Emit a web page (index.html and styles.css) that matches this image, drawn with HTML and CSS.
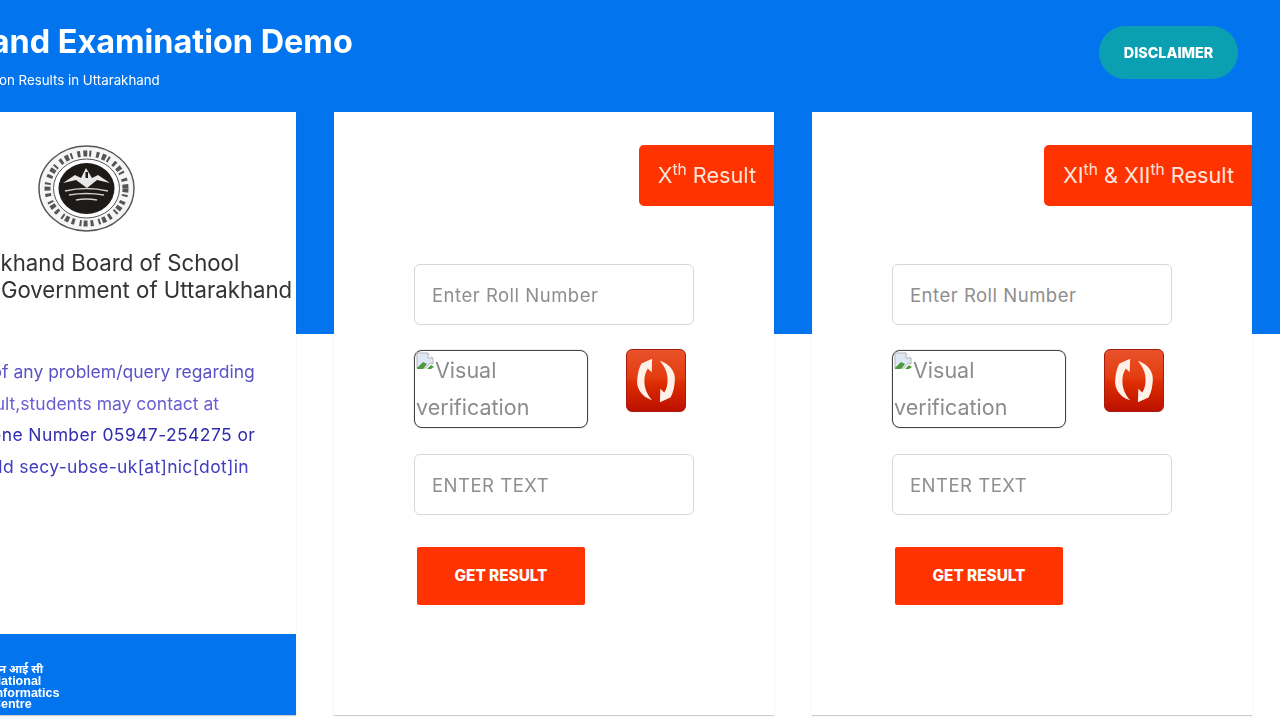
FILE: index.html
```html
<!DOCTYPE html>
<html>
<head>
    <title>Uttarakhand Examination Demo</title>
    <link rel="stylesheet" href="styles.css">
</head>
<body>
    <header class="topbar">
        <div class="brand">
            <h1>Uttarakhand Examination Demo</h1>
            <p>Uttarakhand Board Examination Results in Uttarakhand</p>
        </div>
        <a class="disclaimer" href="#">DISCLAIMER</a>
    </header>

    <main class="panels">
        <section class="card info-card">
            <svg class="seal" viewBox="0 0 97 87">
                <ellipse cx="48.500" cy="43.500" rx="47.500" ry="42.500" fill="#f6f6f6" stroke="#555" stroke-width="1.500"/>
                <ellipse cx="48.500" cy="43.500" rx="39" ry="35" fill="none" stroke="#555" stroke-width="6" stroke-dasharray="4 2 2 5 3 3"/>
                <ellipse cx="48.500" cy="43.500" rx="33" ry="29.500" fill="#fff" stroke="#555" stroke-width="1"/>
                <ellipse cx="48.500" cy="43.500" rx="28" ry="25.500" fill="#1e1a18"/>
                <path d="M25 38 L37 30 L43 33 L48 23 L54 33 L60 30 L72 38 L59 35 L49 43 L38 35 Z" fill="#e8e8e8"/>
                <path d="M47.500 27h2.500v6h-2.500z" fill="#1e1a18"/>
                <path d="M27 46 Q48 41 70 46 M31 50 Q48 47 66 50 M38 55 Q48 53 59 55" fill="none" stroke="#cfcfcf" stroke-width="1.500"/>
            </svg>
            <h2>Uttarakhand Board of School<br>Education, Government of Uttarakhand</h2>
            <div class="help">
                <p class="tone-a">In case of any problem/query regarding</p>
                <p class="tone-b">result,students may contact at</p>
                <p class="tone-c">Telephone Number 05947-254275 or</p>
                <p class="tone-d">Email Id secy-ubse-uk[at]nic[dot]in</p>
            </div>
            <div class="nic">
                <span class="nic-hindi">एन आई सी</span>
                <span>National</span>
                <span>Informatics</span>
                <span>Centre</span>
            </div>
        </section>

        <section class="card form-card">
            <div class="tab">X<sup>th</sup> Result</div>
            <form class="result-form">
                <input type="text" placeholder="Enter Roll Number">
                <div class="captcha-row">
                    <div class="captcha">
                        <svg class="broken" viewBox="0 0 18 18">
                            <path d="M1 1h11l5 5v6l-3-1-4 5H1z" fill="#dfe8f6" stroke="#b4b4b8"/>
                            <path d="M12 1v5h5" fill="#fff" stroke="#b4b4b8"/>
                            <path d="M1 16l6-6 4 2-4 5H1z" fill="#4c9a3c"/>
                            <path d="M11 17l4-4 3 2-3 2z" fill="#4c9a3c"/>
                        </svg>Visual verification
                    </div>
                    <button class="refresh" type="button">
                        <svg viewBox="0 0 60 63">
                            <path d="M26 52 C14 48 10 39 10.500 32 C11 25 12 19 15 14 L26 9 L25.500 23 L21.500 19 C19 23 18 27 18 32 C18 40 21 46 26 52 Z" fill="#fff0e8"/>
                            <path d="M26 52 C14 48 10 39 10.500 32 C11 25 12 19 15 14 L26 9 L25.500 23 L21.500 19 C19 23 18 27 18 32 C18 40 21 46 26 52 Z" fill="#fff0e8" transform="rotate(180 30 31.500)"/>
                        </svg>
                    </button>
                </div>
                <input type="text" placeholder="ENTER TEXT">
                <button class="submit" type="button">GET RESULT</button>
            </form>
        </section>

        <section class="card form-card">
            <div class="tab">XI<sup>th</sup> &amp; XII<sup>th</sup> Result</div>
            <form class="result-form">
                <input type="text" placeholder="Enter Roll Number">
                <div class="captcha-row">
                    <div class="captcha">
                        <svg class="broken" viewBox="0 0 18 18">
                            <path d="M1 1h11l5 5v6l-3-1-4 5H1z" fill="#dfe8f6" stroke="#b4b4b8"/>
                            <path d="M12 1v5h5" fill="#fff" stroke="#b4b4b8"/>
                            <path d="M1 16l6-6 4 2-4 5H1z" fill="#4c9a3c"/>
                            <path d="M11 17l4-4 3 2-3 2z" fill="#4c9a3c"/>
                        </svg>Visual verification
                    </div>
                    <button class="refresh" type="button">
                        <svg viewBox="0 0 60 63">
                            <path d="M26 52 C14 48 10 39 10.500 32 C11 25 12 19 15 14 L26 9 L25.500 23 L21.500 19 C19 23 18 27 18 32 C18 40 21 46 26 52 Z" fill="#fff0e8"/>
                            <path d="M26 52 C14 48 10 39 10.500 32 C11 25 12 19 15 14 L26 9 L25.500 23 L21.500 19 C19 23 18 27 18 32 C18 40 21 46 26 52 Z" fill="#fff0e8" transform="rotate(180 30 31.500)"/>
                        </svg>
                    </button>
                </div>
                <input type="text" placeholder="ENTER TEXT">
                <button class="submit" type="button">GET RESULT</button>
            </form>
        </section>
    </main>
</body>
</html>
```

FILE: styles.css
```css
html, body {
    margin: 0;
    padding: 0;
    height: 720px;
    overflow: hidden;
    background-color: #fff;
    font-family: Inter, "Open Sans", sans-serif;
}

/* the reference is an upscaled capture, so everything is a little soft */
.topbar, .panels {
    filter: blur(0.4px);
}

.topbar {
    display: flex;
    justify-content: space-between;
    align-items: flex-start;
    height: 112px;
    background-color: #0275ee;
    color: #fff;
    margin-left: -145px;
    padding-right: 42px;
}

.brand h1 {
    margin: 23px 0 0;
    font-size: 32.400px;
    line-height: 37px;
    font-weight: 700;
    white-space: nowrap;
}

.brand p {
    margin: 11px 0 0 -38px;
    font-size: 13.300px;
    line-height: 18px;
    white-space: nowrap;
}

.disclaimer {
    margin-top: 26px;
    width: 139px;
    height: 53px;
    line-height: 53px;
    border-radius: 27px;
    background-color: #0aa0b2;
    color: #fff;
    font-size: 14.300px;
    font-weight: 800;
    text-align: center;
    text-decoration: none;
}

.panels {
    display: grid;
    grid-template-columns: 416px 440px 440px;
    column-gap: 38px;
    margin-left: -120px;
    padding-bottom: 5px;
    background: linear-gradient(#0275ee 222px, #fff 222px);
}

.card {
    height: 603px;
    background-color: #fff;
    box-shadow: 0 1px 1px rgba(0, 0, 0, 0.2);
}

.info-card {
    display: flex;
    flex-direction: column;
    align-items: center;
}

.seal {
    display: block;
    width: 97px;
    height: 87px;
    margin: 33px 4px 0 0;
    flex: none;
}

.info-card h2 {
    margin: 17px 0 0;
    font-size: 22.200px;
    line-height: 27px;
    font-weight: 400;
    color: #333;
    text-align: center;
    white-space: nowrap;
}

.help {
    margin-top: 53px;
    margin-left: 12px;
    text-align: center;
    font-size: 17.500px;
    line-height: 31.500px;
}

.help p {
    margin: 0;
    white-space: nowrap;
}

.tone-a { color: #5a50c8; padding-right: 6px; }
.tone-b { color: #6a5cd2; }
.tone-c { color: #2f2db0; letter-spacing: 0.4px; }
.tone-d { color: #3f3cc0; letter-spacing: 0.3px; padding-left: 8px; }

.nic {
    display: flex;
    flex-direction: column;
    align-self: stretch;
    height: 81px;
    margin-top: auto;
    padding: 28px 0 0 112px;
    box-sizing: border-box;
    background-color: #0275ee;
    color: #fff;
    font-family: "Liberation Sans", sans-serif;
    font-size: 12.500px;
    font-weight: 700;
    line-height: 11.700px;
}

.nic-hindi {
    font-family: "Noto Sans", "Liberation Sans", sans-serif;
    font-size: 11.500px;
    line-height: 14px;
}

.form-card {
    display: flex;
    flex-direction: column;
}

.tab {
    align-self: flex-end;
    margin-top: 33px;
    padding: 0 18px 0 18.500px;
    height: 61px;
    line-height: 61px;
    border-radius: 5px 0 0 5px;
    background-color: #ff3300;
    color: #ffe4da;
    font-size: 21.700px;
    white-space: nowrap;
}

.tab sup {
    font-size: 15.500px;
    line-height: 0;
}

.result-form {
    display: flex;
    flex-direction: column;
    align-items: flex-start;
    padding: 58px 80px 0;
}

.result-form input {
    width: 280px;
    height: 61px;
    padding: 0 17px;
    box-sizing: border-box;
    border: 1px solid #d8d8d8;
    border-radius: 6px;
    font-family: inherit;
    font-size: 18.500px;
    letter-spacing: 0.5px;
    color: #555;
}

.result-form input::placeholder {
    color: #8e8e8e;
}

.captcha-row {
    display: flex;
    align-items: flex-start;
    margin: 25px 0 26px;
}

.captcha {
    width: 174px;
    height: 78px;
    box-sizing: border-box;
    border: 1px solid #444;
    border-radius: 8px;
    padding: 1px;
    font-size: 21.500px;
    line-height: 37px;
    color: #8c8c8c;
    box-shadow: 0 0 1px #555;
}

.broken {
    width: 18px;
    height: 18px;
    vertical-align: top;
    margin-right: 1px;
}

.refresh {
    width: 60px;
    height: 63px;
    margin-left: 38px;
    margin-top: -1px;
    padding: 0;
    border: 1px solid #a81c10;
    border-radius: 6px;
    background: linear-gradient(#e8532a 0%, #e43c10 45%, #dc2c00 55%, #bc1000 100%);
}

.refresh svg {
    display: block;
    width: 100%;
    height: 100%;
}

.submit {
    width: 168px;
    height: 58px;
    margin: 32px 0 0 3px;
    padding-bottom: 3px;
    border: none;
    border-radius: 2px;
    background-color: #ff3300;
    color: #fff;
    font-family: inherit;
    font-size: 15.300px;
    font-weight: 800;
}
```
